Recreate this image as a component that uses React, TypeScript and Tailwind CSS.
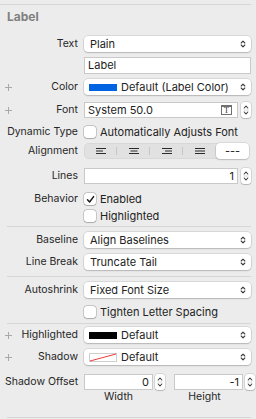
import React from 'react'

const FONT = { fontFamily: 'Inter, "Noto Sans", sans-serif' }

function Chevrons() {
  return (
    <svg width="6" height="10" viewBox="0 0 6 10" className="shrink-0">
      <path d="M1.2 4 L3 2.2 L4.8 4" fill="none" stroke="#3a3a3a" strokeWidth="1.1" strokeLinecap="round" strokeLinejoin="round" />
      <path d="M1.2 6 L3 7.8 L4.8 6" fill="none" stroke="#3a3a3a" strokeWidth="1.1" strokeLinecap="round" strokeLinejoin="round" />
    </svg>
  )
}

function Plus() {
  return (
    <svg width="7" height="7" viewBox="0 0 7 7" className="shrink-0">
      <path d="M3.5 0 V7 M0 3.5 H7" stroke="#a9a9a9" strokeWidth="1" />
    </svg>
  )
}

function Stepper({ className = '' }: { className?: string }) {
  return (
    <div className={`flex flex-col items-center justify-center w-[10px] h-[16px] bg-white rounded-[3px] shadow-[0_0_0_0.5px_rgba(0,0,0,0.18),0_1px_1px_rgba(0,0,0,0.15)] ${className}`}>
      <svg width="6" height="14" viewBox="0 0 6 14">
        <path d="M1.2 5 L3 3 L4.8 5" fill="none" stroke="#3a3a3a" strokeWidth="1.1" strokeLinecap="round" strokeLinejoin="round" />
        <path d="M0.5 7 H5.5" stroke="#d0d0d0" strokeWidth="0.8" />
        <path d="M1.2 9 L3 11 L4.8 9" fill="none" stroke="#3a3a3a" strokeWidth="1.1" strokeLinecap="round" strokeLinejoin="round" />
      </svg>
    </div>
  )
}

function Popup({ children }: { children: React.ReactNode }) {
  return (
    <div className="flex-1 h-[16px] flex items-center justify-between pl-[6px] pr-[5px] bg-white rounded-[4px] shadow-[0_0_0_0.5px_rgba(0,0,0,0.16),0_1px_1.5px_rgba(0,0,0,0.16)] text-[#222]">
      <div className="flex items-center gap-[4px]">{children}</div>
      <Chevrons />
    </div>
  )
}

function Field({ children, className = '', right = false }: { children?: React.ReactNode; className?: string; right?: boolean }) {
  return (
    <div className={`h-[16px] bg-white border border-[#c9c9c9] flex items-center px-[3px] text-[#222] ${right ? 'justify-end' : ''} ${className}`}>
      {children}
    </div>
  )
}

function Checkbox({ checked = false }: { checked?: boolean }) {
  return (
    <div className="w-[12px] h-[12px] bg-white rounded-[3px] shadow-[0_0_0_0.5px_rgba(0,0,0,0.3),0_0.5px_1px_rgba(0,0,0,0.15)] flex items-center justify-center shrink-0">
      {checked && (
        <svg width="9" height="9" viewBox="0 0 9 9">
          <path d="M1.5 4.8 L3.6 7 L7.6 1.6" fill="none" stroke="#1a1a1a" strokeWidth="1.5" strokeLinecap="round" strokeLinejoin="round" />
        </svg>
      )}
    </div>
  )
}

function Row({ label, plus = false, className = '', children }: { label?: string; plus?: boolean; className?: string; children: React.ReactNode }) {
  return (
    <div className={`flex items-center pr-[5px] ${className}`}>
      <div className="w-[78px] flex items-center justify-between pl-[5px] shrink-0">
        {plus ? <Plus /> : <span />}
        <span className="text-[10.5px] text-[#262626] whitespace-nowrap">{label}</span>
      </div>
      <div className="ml-[6px] flex-1 flex items-center">{children}</div>
    </div>
  )
}

function Sep({ className = '' }: { className?: string }) {
  return <div className={`h-px bg-[#d6d6d6] ml-[7px] mr-[5px] ${className}`} />
}

function AlignIcon({ kind }: { kind: 'left' | 'center' | 'right' | 'justify' }) {
  const short = { left: 'M0 3 H7', center: 'M1.5 3 H8.5', right: 'M3 3 H10', justify: 'M0 3 H10' }[kind]
  return (
    <svg width="10" height="6" viewBox="0 0 10 6">
      <path d={`M0 0.5 H10 ${short} M0 5.5 H10`} stroke="#2a2a2a" strokeWidth="1" />
    </svg>
  )
}

export default function App() {
  return (
    <div className="w-[256px] h-[419px] bg-[#ececec] text-[11px] leading-none pt-[4px] overflow-hidden" style={FONT}>
      <div className="h-px bg-[#d6d6d6] mr-[5px]" />
      <div className="h-[23px] flex items-center pl-[7px] text-[12px] font-bold text-[#808080]">Label</div>

      <Row label="Text" className="mt-[8px] h-[16px]">
        <Popup>Plain</Popup>
      </Row>
      <Row className="mt-[5px] h-[17px]">
        <Field className="flex-1 h-[17px]">Label</Field>
      </Row>
      <Row label="Color" plus className="mt-[5px] h-[16px]">
        <Popup>
          <span className="w-[28px] h-[7px] bg-[#0063e1] ml-[-1px]" />
          <span>Default (Label Color)</span>
        </Popup>
      </Row>
      <Row label="Font" plus className="mt-[7px] h-[16px]">
        <Field className="flex-1 justify-between">
          <span>System 50.0</span>
          <span className="w-[11px] h-[10px] border border-[#707070] border-t-[2px] flex items-center justify-center text-[8px] text-[#333] mr-[2px]" style={{ fontFamily: '"Liberation Serif", serif' }}>T</span>
        </Field>
        <Stepper className="ml-[3px]" />
      </Row>
      <Row label="Dynamic Type" className="mt-[8px] h-[12px]">
        <Checkbox />
        <span className="ml-[4px] text-[#222] whitespace-nowrap">Automatically Adjusts Font</span>
      </Row>
      <Row label="Alignment" className="mt-[5px] h-[16px]">
        <div className="mr-[2px] flex-1 h-[16px] bg-[#e1e1e1] rounded-[5px] shadow-[inset_0_0_0_0.5px_rgba(0,0,0,0.08)] grid grid-cols-5 items-center">
          {(['left', 'center', 'right', 'justify'] as const).map((k, i) => (
            <div key={k} className="relative flex items-center justify-center h-full">
              <AlignIcon kind={k} />
              {i < 3 && <span className="absolute right-0 top-[4px] w-px h-[8px] bg-[#c6c6c6]" />}
            </div>
          ))}
          <div className="h-full bg-white rounded-[4px] shadow-[0_0_0_0.5px_rgba(0,0,0,0.15),0_1px_1.5px_rgba(0,0,0,0.15)] flex items-center justify-center text-[#222]">---</div>
        </div>
      </Row>
      <Row label="Lines" className="mt-[9px] h-[16px]">
        <Field className="flex-1" right>1</Field>
        <Stepper className="ml-[3px]" />
      </Row>
      <Row label="Behavior" className="mt-[9px] h-[12px]">
        <Checkbox checked />
        <span className="ml-[4px] text-[#222]">Enabled</span>
      </Row>
      <Row className="mt-[5px] h-[12px]">
        <Checkbox />
        <span className="ml-[4px] text-[#222]">Highlighted</span>
      </Row>

      <Sep className="mt-[4px]" />

      <Row label="Baseline" className="mt-[5px] h-[16px]">
        <Popup>Align Baselines</Popup>
      </Row>
      <Row label="Line Break" className="mt-[6px] h-[16px]">
        <Popup>Truncate Tail</Popup>
      </Row>

      <Sep className="mt-[6px]" />

      <Row label="Autoshrink" className="mt-[5px] h-[16px]">
        <Popup>Fixed Font Size</Popup>
      </Row>
      <Row className="mt-[8px] h-[12px]">
        <Checkbox />
        <span className="ml-[4px] text-[#222]">Tighten Letter Spacing</span>
      </Row>

      <Sep className="mt-[5px]" />

      <Row label="Highlighted" plus className="mt-[3px] h-[16px]">
        <Popup>
          <span className="w-[28px] h-[7px] bg-black ml-[-1px]" />
          <span>Default</span>
        </Popup>
      </Row>
      <Row label="Shadow" plus className="mt-[6px] h-[16px]">
        <Popup>
          <svg width="28" height="9" viewBox="0 0 28 9" className="ml-[-1px]">
            <rect x="0.5" y="0.5" width="27" height="8" fill="#fff" stroke="#cfcfcf" />
            <path d="M1 8 L27 1" stroke="#f03a3a" strokeWidth="1" />
          </svg>
          <span>Default</span>
        </Popup>
      </Row>
      <Row label="Shadow Offset" className="mt-[9px] h-[16px]">
        <Field className="w-[69px]" right>0</Field>
        <Stepper className="ml-[2px]" />
        <Field className="w-[69px] ml-[9px]" right>-1</Field>
        <Stepper className="ml-[2px]" />
      </Row>
      <div className="mt-[1px] h-[12px] flex items-center text-[10.5px] text-[#262626]">
        <span className="ml-[84px] w-[69px] text-center">Width</span>
        <span className="ml-[19px] w-[65px] text-center">Height</span>
      </div>

      <Sep className="mt-[14px]" />
    </div>
  )
}
